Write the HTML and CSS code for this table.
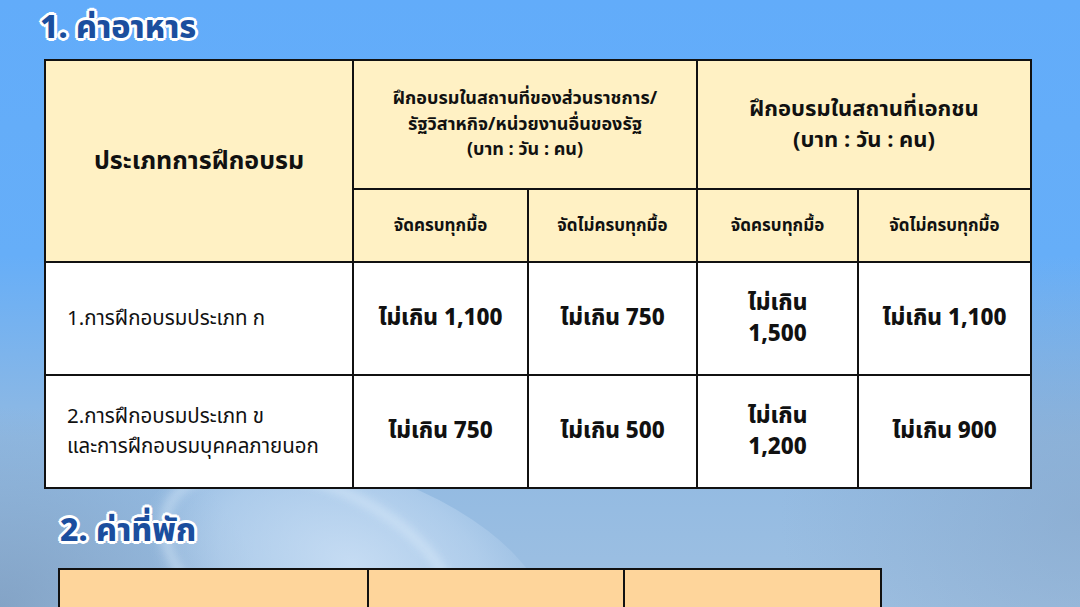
FILE: index.html
```html
<!DOCTYPE html>
<html lang="th">
<head>
<meta charset="utf-8">
<link rel="stylesheet" href="styles.css">
</head>
<body>
<div class="page">
  <div class="plate"></div>
  <div class="plate-rim"></div>
  <section class="sec sec1">
    <h1 class="title">1. ค่าอาหาร</h1>
    <table class="grid food">
      <colgroup>
        <col style="width:308px"><col style="width:175px"><col style="width:169px"><col style="width:161px"><col style="width:173px">
      </colgroup>
      <tr class="h1row">
        <th rowspan="2" class="big">ประเภทการฝึกอบรม</th>
        <th colspan="2" class="mid">ฝึกอบรมในสถานที่ของส่วนราชการ/<br>รัฐวิสาหกิจ/หน่วยงานอื่นของรัฐ<br>(บาท : วัน : คน)</th>
        <th colspan="2" class="mid2">ฝึกอบรมในสถานที่เอกชน<br>(บาท : วัน : คน)</th>
      </tr>
      <tr class="h2row">
        <th class="sub">จัดครบทุกมื้อ</th>
        <th class="sub">จัดไม่ครบทุกมื้อ</th>
        <th class="sub">จัดครบทุกมื้อ</th>
        <th class="sub">จัดไม่ครบทุกมื้อ</th>
      </tr>
      <tr class="drow">
        <td class="label">1.การฝึกอบรมประเภท ก</td>
        <td class="val">ไม่เกิน 1,100</td>
        <td class="val">ไม่เกิน 750</td>
        <td class="val">ไม่เกิน<br>1,500</td>
        <td class="val">ไม่เกิน 1,100</td>
      </tr>
      <tr class="drow">
        <td class="label">2.การฝึกอบรมประเภท ข<br>และการฝึกอบรมบุคคลภายนอก</td>
        <td class="val">ไม่เกิน 750</td>
        <td class="val">ไม่เกิน 500</td>
        <td class="val">ไม่เกิน<br>1,200</td>
        <td class="val">ไม่เกิน 900</td>
      </tr>
    </table>
  </section>
  <section class="sec sec2">
    <h1 class="title">2. ค่าที่พัก</h1>
    <table class="grid lodge">
      <colgroup>
        <col style="width:309px"><col style="width:256px"><col style="width:257px">
      </colgroup>
      <tr class="h1row">
        <th></th>
        <th class="mid">ค่าเช่าห้องพักคนเดียว</th>
        <th class="mid">ค่าเช่าห้องพักคู่</th>
      </tr>
    </table>
  </section>
</div>
</body>
</html>
```
FILE: styles.css
```css
html, body {
  margin: 0;
  padding: 0;
}
body {
  width: 1080px;
  height: 607px;
  overflow: hidden;
  font-family: "Noto Sans Thai", "Noto Sans", "DejaVu Sans", sans-serif;
}
.page {
  position: relative;
  width: 1080px;
  height: 607px;
  overflow: hidden;
  background:
    radial-gradient(ellipse 260px 200px at 0% 100%, rgba(110,140,175,0.55), rgba(110,140,175,0)),
    radial-gradient(ellipse 300px 260px at 100% 85%, rgba(130,160,195,0.45), rgba(130,160,195,0)),
    linear-gradient(180deg, #62acfa 0%, #66aef8 42%, #90b9e2 72%, #9ec0e2 100%);
}
.plate {
  position: absolute;
  left: 130px;
  top: 470px;
  width: 430px;
  height: 230px;
  border-radius: 50%;
  background: radial-gradient(ellipse at 50% 40%, rgba(215,232,250,0.7) 0%, rgba(200,222,245,0.45) 45%, rgba(180,205,235,0) 70%);
  transform: rotate(18deg);
}
.plate-rim {
  position: absolute;
  left: 150px;
  top: 480px;
  width: 300px;
  height: 160px;
  border-radius: 50%;
  border: 10px solid rgba(235,245,255,0.35);
  filter: blur(4px);
  transform: rotate(24deg);
}
.sec {
  position: relative;
  display: flex;
  flex-direction: column;
}
.sec1 {
  padding: 6px 0 0 40px;
}
.sec2 {
  padding: 20px 0 0 60px;
}
.title {
  margin: 0;
  font-size: 32px;
  font-weight: 800;
  line-height: 44px;
  color: #1b4e9e;
  text-shadow:
    2px 0 0 #fff, -2px 0 0 #fff, 0 2px 0 #fff, 0 -2px 0 #fff,
    2px 2px 0 #fff, -2px -2px 0 #fff, 2px -2px 0 #fff, -2px 2px 0 #fff,
    3px 0 0 #fff, -3px 0 0 #fff, 0 3px 0 #fff, 0 -3px 0 #fff;
}
.grid {
  border-collapse: collapse;
  table-layout: fixed;
  color: #111;
}
.food {
  margin: 9px 0 0 4px;
  width: 986px;
}
.lodge {
  margin: 15px 0 0 -2px;
  width: 822px;
}
.grid th, .grid td {
  border: 2.5px solid #111;
  text-align: center;
  vertical-align: middle;
  padding: 0 4px;
}
.grid th {
  background: #fff1c4;
  font-weight: 700;
}
.lodge th {
  background: #fed59b;
  height: 60px;
}
.grid td {
  background: #ffffff;
}
.h1row th {
  height: 127px;
}
.h2row th {
  height: 71px;
}
.big {
  font-size: 25px;
}
.mid {
  font-size: 18px;
  line-height: 25.5px;
}
.mid2 {
  font-size: 22px;
  line-height: 31px;
}
.sub {
  font-size: 17px;
}
.drow td {
  height: 111px;
}
.label {
  text-align: left !important;
  padding-left: 21px !important;
  font-size: 20.5px;
  line-height: 30px;
  font-weight: 400;
}
.val {
  font-size: 22.5px;
  font-weight: 800;
  line-height: 31px;
}
```
